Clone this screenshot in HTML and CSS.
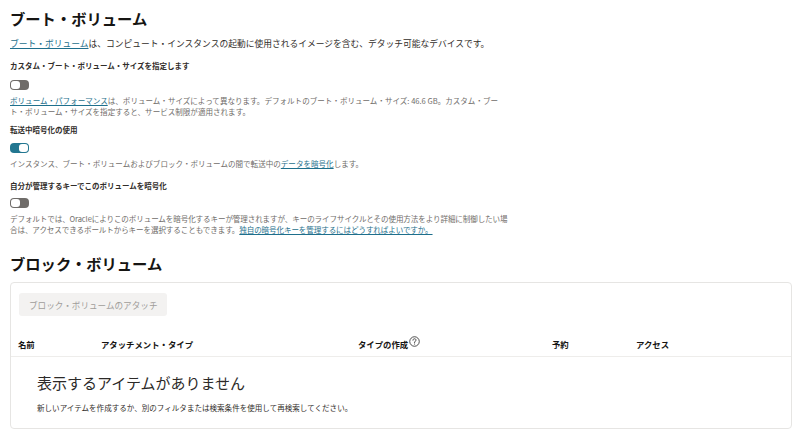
FILE: index.html
```html
<!DOCTYPE html>
<html lang="ja">
<head>
<meta charset="utf-8">
<title>ブート・ボリューム</title>
<link rel="stylesheet" href="styles.css">
</head>
<body>
<main class="page">
  <h1 class="title">ブート・ボリューム</h1>
  <p class="intro"><a href="#" class="link">ブート・ボリューム</a>は、コンピュート・インスタンスの起動に使用されるイメージを含む、デタッチ可能なデバイスです。</p>

  <div class="field field-1">
    <div class="label">カスタム・ブート・ボリューム・サイズを指定します</div>
    <span class="toggle"><span class="knob"></span></span>
    <p class="help"><a href="#" class="link">ボリューム・パフォーマンス</a>は、ボリューム・サイズによって異なります。デフォルトのブート・ボリューム・サイズ: 46.6 GB。カスタム・ブート・ボリューム・サイズを指定すると、サービス制限が適用されます。</p>
  </div>

  <div class="field field-2">
    <div class="label">転送中暗号化の使用</div>
    <span class="toggle on"><span class="knob"></span></span>
    <p class="help">インスタンス、ブート・ボリュームおよびブロック・ボリュームの間で転送中の<a href="#" class="link">データを暗号化</a>します。</p>
  </div>

  <div class="field field-3">
    <div class="label">自分が管理するキーでこのボリュームを暗号化</div>
    <span class="toggle"><span class="knob"></span></span>
    <p class="help">デフォルトでは、Oracleによりこのボリュームを暗号化するキーが管理されますが、キーのライフサイクルとその使用方法をより詳細に制御したい場合は、アクセスできるボールトからキーを選択することもできます。<a href="#" class="link">独自の暗号化キーを管理するにはどうすればよいですか。</a></p>
  </div>

  <h2 class="title title-2">ブロック・ボリューム</h2>

  <section class="card">
    <div class="toolbar">
      <button class="btn" type="button" disabled>ブロック・ボリュームのアタッチ</button>
    </div>
    <div class="thead">
      <div class="th">名前</div>
      <div class="th">アタッチメント・タイプ</div>
      <div class="th">タイプの作成<svg class="qicon" viewBox="0 0 12 12" width="11" height="11" aria-hidden="true"><circle cx="6" cy="6" r="5.2" fill="none" stroke="#2b2b2b" stroke-width="0.9"/><path d="M4.3 4.6 C4.3 3.5 5.1 3 6 3 C6.9 3 7.7 3.6 7.7 4.5 C7.7 5.5 6.4 5.7 6.1 6.6 L6.1 7.3" fill="none" stroke="#2b2b2b" stroke-width="0.9" stroke-linecap="round"/><circle cx="6.1" cy="8.8" r="0.6" fill="#2b2b2b"/></svg></div>
      <div class="th">予約</div>
      <div class="th">アクセス</div>
    </div>
    <div class="empty">
      <div class="empty-title">表示するアイテムがありません</div>
      <div class="empty-text">新しいアイテムを作成するか、別のフィルタまたは検索条件を使用して再検索してください。</div>
    </div>
  </section>
</main>
</body>
</html>
```

FILE: styles.css
```css
* { box-sizing: border-box; }

html, body {
  margin: 0;
  padding: 0;
  background: #ffffff;
}

body {
  font-family: "Noto Sans CJK JP", "Noto Sans", sans-serif;
  color: #312d2a;
}

.page {
  padding: 8px 8px 0 10px;
}

.title {
  margin: 0;
  font-size: 15.3px;
  line-height: 20px;
  font-weight: 700;
  color: #161513;
}

.title-2 {
  margin-top: 18px;
}

.intro {
  margin: 10px 0 0;
  font-size: 8.75px;
  line-height: 12px;
  color: #312d2a;
}

.link {
  color: #1e6f8c;
  text-decoration: underline;
  text-underline-offset: 1px;
}

.field {
  max-width: 499.5px;
}

.label {
  font-size: 7.5px;
  line-height: 11px;
  font-weight: 700;
  color: #312d2a;
}

.field-1 .label { margin-top: 9.5px; }
.field-2 .label { margin-top: 7px; }
.field-3 .label { margin-top: 11px; }

.toggle {
  display: block;
  position: relative;
  width: 19px;
  height: 10px;
  border-radius: 4px;
  background: #6f6c69;
  margin-top: 9.5px;
}

.field-2 .toggle { margin-top: 8.5px; }
.field-3 .toggle { margin-top: 7.5px; }

.toggle .knob {
  position: absolute;
  top: 1px;
  left: 1px;
  width: 9px;
  height: 8px;
  border-radius: 3px;
  background: #ffffff;
}

.toggle.on {
  background: #227690;
}

.toggle.on .knob {
  left: auto;
  right: 1px;
}

.help {
  margin: 4.5px 0 0;
  font-size: 7.55px;
  line-height: 11px;
  color: #6f6c69;
}

.field-3 .help {
  letter-spacing: -0.1px;
}

.card {
  margin-top: 9px;
  border: 1px solid #e6e5e3;
  border-radius: 4px;
  background: #ffffff;
}

.toolbar {
  padding: 7px 8px 0;
}

.btn {
  height: 23px;
  padding: 0 10px;
  border: none;
  border-radius: 3px;
  background: #f3f2f1;
  color: #a09d9a;
  font-family: "Noto Sans CJK JP", "Noto Sans", sans-serif;
  font-size: 8.6px;
}

.thead {
  margin-top: 15px;
  display: grid;
  grid-template-columns: 83px 257px 194px 84px 1fr;
  align-items: center;
  height: 26px;
  padding-left: 7px;
  border-bottom: 1px solid #eeedeb;
}

.th {
  display: flex;
  align-items: center;
  font-size: 8.4px;
  font-weight: 700;
  color: #161513;
}

.qicon {
  margin-left: 1px;
  margin-top: -4px;
}

.empty {
  padding: 16px 26px 15px;
}

.empty-title {
  font-size: 15px;
  line-height: 20px;
  font-weight: 400;
  color: #2c2a28;
}

.empty-text {
  margin-top: 8.5px;
  font-size: 7.55px;
  line-height: 11px;
  color: #312d2a;
}
```
